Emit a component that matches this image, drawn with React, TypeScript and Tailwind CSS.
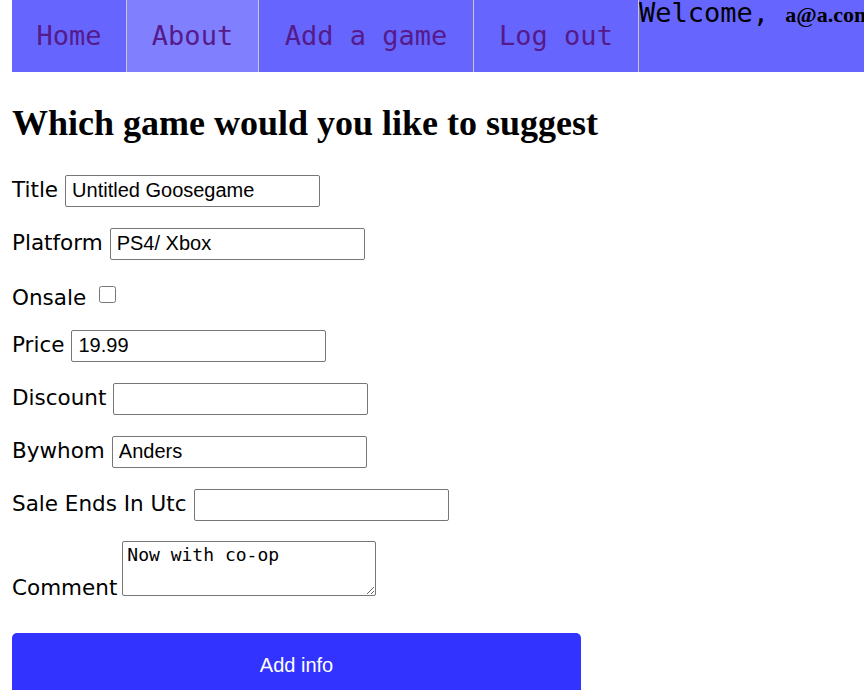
import React from "react";

const mono = { fontFamily: '"DejaVu Sans Mono", monospace' };

export default function App() {
  const labelCls = "text-[21.5px] text-black [font-family:'DejaVu_Sans',sans-serif]";
  const inputCls =
    "w-[255px] h-[32px] border border-[#767676] rounded-[2px] px-[6px] text-[20px] text-black [font-family:'Liberation_Sans',Arial,sans-serif] outline-none bg-white";
  const Row = ({ label, value }: { label: string; value: string }) => (
    <div className="flex items-baseline gap-[7px] h-[32px] mb-[21px]">
      <span className={labelCls}>{label}</span>
      <input className={inputCls} defaultValue={value} />
    </div>
  );
  return (
    <div className="bg-white min-h-screen pl-[12px] overflow-hidden">
      <nav className="flex h-[72px] bg-[#6666ff]">
        <a className="w-[115px] flex items-center justify-center border-r border-[#c8c8c8] text-[27px] text-[#551a8b]" style={mono}>Home</a>
        <a className="w-[132px] flex items-center justify-center border-r border-[#c8c8c8] bg-[#8080ff] text-[27px] text-[#551a8b]" style={mono}>About</a>
        <a className="w-[215px] flex items-center justify-center border-r border-[#c8c8c8] text-[27px] text-[#551a8b]" style={mono}>Add a game</a>
        <a className="w-[165px] flex items-center justify-center border-r border-[#c8c8c8] text-[27px] text-[#551a8b]" style={mono}>Log out</a>
        <div className="flex-1 min-w-0 whitespace-nowrap overflow-hidden leading-[26px]">
          <span className="text-[27px] text-black" style={mono}>Welcome, </span>
          <b className="text-[22px] text-black [font-family:'Liberation_Serif',serif]">a@a.com</b>
        </div>
      </nav>
      <h1 className="mt-[30px] mb-[30px] text-[36px] font-bold leading-[42px] text-black [font-family:'Liberation_Serif',serif]">
        Which game would you like to suggest
      </h1>
      <form onSubmit={(e) => e.preventDefault()}>
        <Row label="Title" value="Untitled Goosegame" />
        <Row label="Platform" value="PS4/ Xbox" />
        <div className="flex items-center gap-[13px] h-[28px] mb-[21px]">
          <span className={labelCls + " translate-y-[4px]"}>Onsale</span>
          <input type="checkbox" className="w-[17px] h-[17px] m-0" />
        </div>
        <Row label="Price" value="19.99" />
        <Row label="Discount" value="" />
        <Row label="Bywhom" value="Anders" />
        <Row label="Sale Ends In Utc" value="" />
        <div className="flex items-end gap-[5px] h-[55px] mt-[1px] mb-[37px]">
          <span className={labelCls + " leading-[20px] translate-y-[2px]"}>Comment</span>
          <textarea
            className="w-[254px] h-[55px] border border-[#767676] rounded-[2px] px-[4px] pt-[2px] text-[18px] leading-[22px] text-black outline-none"
            style={mono}
            defaultValue="Now with co-op"
          />
        </div>
        <button
          type="submit"
          className="w-[569px] h-[64px] rounded-[5px] bg-[#3333ff] text-white text-[20px] [font-family:'Liberation_Sans',Arial,sans-serif]"
        >
          Add info
        </button>
      </form>
    </div>
  );
}
